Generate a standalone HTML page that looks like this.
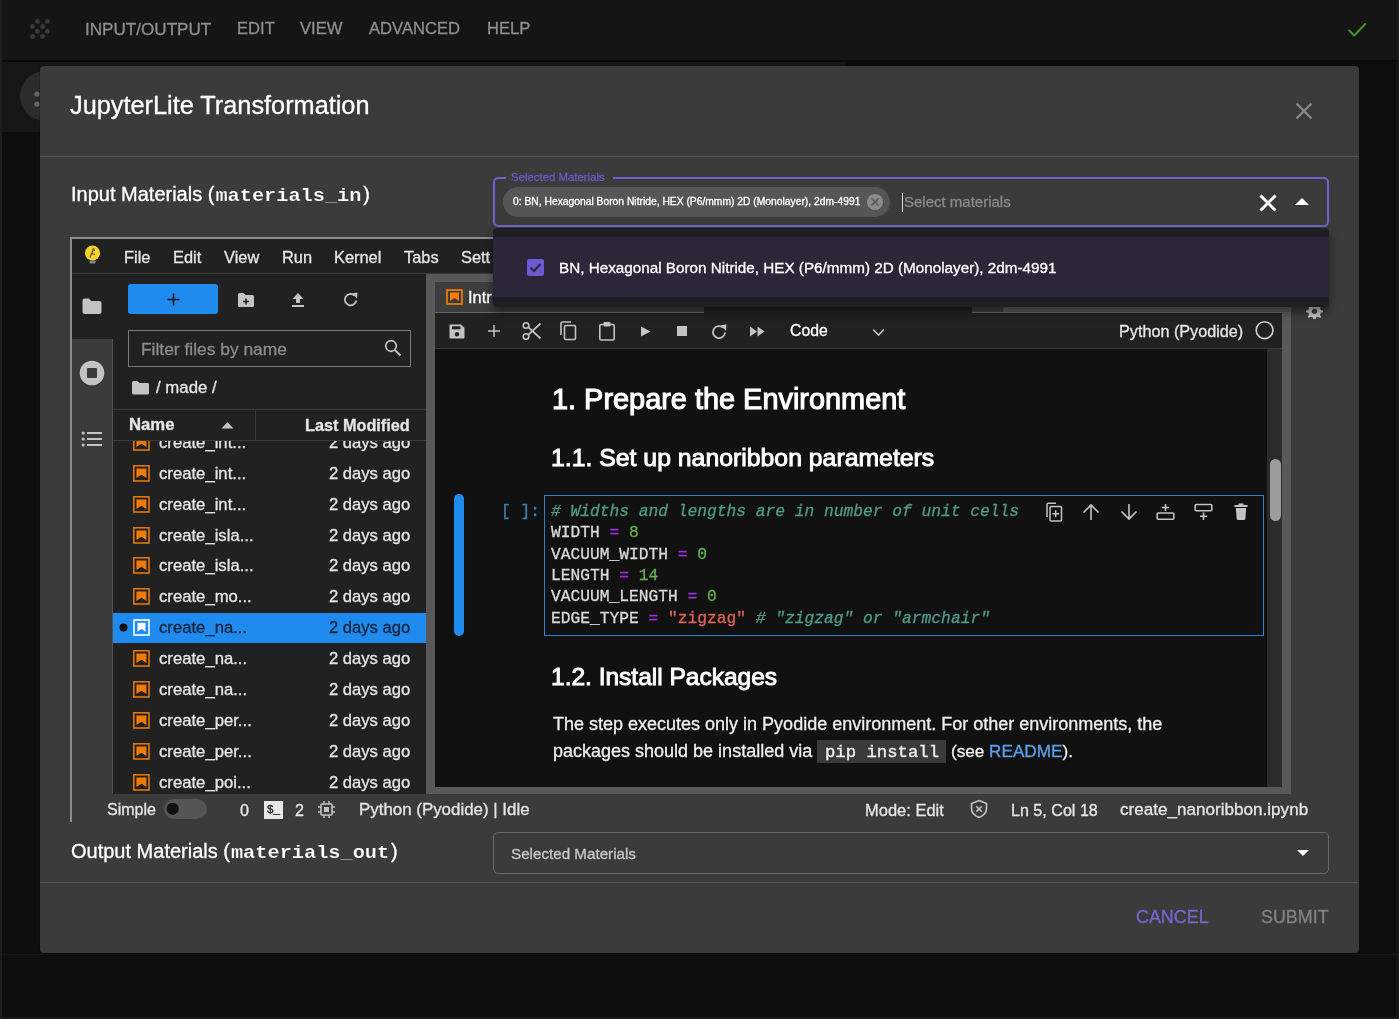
<!DOCTYPE html>
<html><head><meta charset="utf-8"><style>
html,body{margin:0;padding:0;width:1399px;height:1019px;overflow:hidden;background:#0e0e0e;}
.r{position:absolute;display:block;}
.t{position:absolute;white-space:nowrap;line-height:1;-webkit-font-smoothing:antialiased;will-change:transform;-webkit-text-stroke-width:0.3px;}
svg.r{overflow:visible;}
</style></head><body>
<div class="r" style="left:0px;top:0px;width:1399px;height:1019px;background:#0e0e0e;"></div>
<div class="r" style="left:0px;top:0px;width:1399px;height:60px;background:#151515;"></div>
<div class="r" style="left:0px;top:60px;width:1399px;height:2px;background:#0a0a0a;"></div>
<div class="r" style="left:2px;top:62px;width:843px;height:70px;background:#171717;"></div>
<div class="r" style="left:2px;top:954px;width:1397px;height:1px;background:#171717;"></div>
<div class="r" style="left:0px;top:1017px;width:1399px;height:2px;background:#1a1a1a;"></div>
<div class="r" style="left:0px;top:0px;width:1.5px;height:1019px;background:#1d1d1d;"></div>
<div class="r" style="left:1397px;top:0px;width:2px;height:1019px;background:#1b1b1b;"></div>
<svg class="r" style="left:18px;top:70px;" width="52" height="52" viewBox="0 0 52 52"><circle cx="27" cy="26" r="25" fill="#2c2c2c"/><circle cx="19" cy="24" r="2.6" fill="#666"/><circle cx="19" cy="34" r="2.6" fill="#666"/></svg>
<svg class="r" style="left:28px;top:17px;" width="26" height="24" viewBox="0 0 26 24"><circle cx="9.5" cy="4.399999999999999" r="2.4" fill="#3a3a3a"/><circle cx="19.4" cy="4.399999999999999" r="2.4" fill="#3a3a3a"/><circle cx="4.399999999999999" cy="9.5" r="2.4" fill="#3a3a3a"/><circle cx="14.600000000000001" cy="9.5" r="2.4" fill="#3a3a3a"/><circle cx="9.399999999999999" cy="14.5" r="2.4" fill="#3a3a3a"/><circle cx="19.4" cy="14.5" r="2.4" fill="#3a3a3a"/><circle cx="4.5" cy="19.5" r="2.4" fill="#3a3a3a"/><circle cx="14.600000000000001" cy="19.5" r="2.4" fill="#3a3a3a"/></svg>
<div class="t" style="left:85px;top:20.76px;font-size:17.1px;color:#8f8f8f;font-weight:normal;font-family:'Liberation Sans', sans-serif;">INPUT/OUTPUT</div>
<div class="t" style="left:236.5px;top:21.19px;font-size:16.6px;color:#8f8f8f;font-weight:normal;font-family:'Liberation Sans', sans-serif;">EDIT</div>
<div class="t" style="left:300px;top:21.19px;font-size:16.6px;color:#8f8f8f;font-weight:normal;font-family:'Liberation Sans', sans-serif;">VIEW</div>
<div class="t" style="left:368.7px;top:21.19px;font-size:16.6px;color:#8f8f8f;font-weight:normal;font-family:'Liberation Sans', sans-serif;">ADVANCED</div>
<div class="t" style="left:486.6px;top:21.19px;font-size:16.6px;color:#8f8f8f;font-weight:normal;font-family:'Liberation Sans', sans-serif;">HELP</div>
<svg class="r" style="left:1345px;top:18px;" width="26" height="22" viewBox="0 0 26 22"><polyline points="4.2,12.6 9.2,17.4 20.3,6" fill="none" stroke="#47922c" stroke-width="2.1" stroke-linecap="round" stroke-linejoin="round"/></svg>
<div class="r" style="left:40px;top:66px;width:1319px;height:887px;background:#3b3b3b;border-radius:4px;box-shadow:0 0 2px rgba(0,0,0,.6);"></div>
<div class="t" style="left:70px;top:92.80px;font-size:25.3px;color:#fff;font-weight:normal;font-family:'Liberation Sans', sans-serif;">JupyterLite Transformation</div>
<svg class="r" style="left:1295px;top:102px;" width="18" height="18" viewBox="0 0 18 18"><path d="M1.5 1.5L16.5 16.5M16.5 1.5L1.5 16.5" stroke="#8a8a8a" stroke-width="2.2"/></svg>
<div class="r" style="left:40px;top:156px;width:1319px;height:1px;background:#555;"></div>
<div class="t" style="left:71px;top:183.60px;font-size:20px;color:#fff;font-weight:normal;font-family:'Liberation Sans', sans-serif;">Input Materials (<span style="font-family:'Liberation Mono', monospace;font-weight:bold;font-size:20.3px;margin-left:1px;display:inline-block;transform:scaleY(0.9);transform-origin:0 80%;-webkit-text-stroke:0.2px #3b3b3b">materials_in</span><span style="margin-left:1.8px">)</span></div>
<div class="t" style="left:70.7px;top:841.00px;font-size:20px;color:#fff;font-weight:normal;font-family:'Liberation Sans', sans-serif;">Output Materials (<span style="font-family:'Liberation Mono', monospace;font-weight:bold;font-size:20.3px;margin-left:1px;display:inline-block;transform:scaleY(0.9);transform-origin:0 80%;-webkit-text-stroke:0.2px #3b3b3b">materials_out</span><span style="margin-left:1.8px">)</span></div>
<div class="r" style="left:70px;top:237px;width:1259px;height:584px;background:#3b3b3b;"></div>
<div class="r" style="left:70px;top:237px;width:2px;height:585px;background:#8c8c8c;"></div>
<div class="r" style="left:70px;top:237px;width:1259px;height:2px;background:#8c8c8c;"></div>
<div class="r" style="left:72px;top:239px;width:1257px;height:34px;background:#212121;"></div>
<div class="r" style="left:72px;top:273px;width:1257px;height:1px;background:#3a3a3a;"></div>
<svg class="r" style="left:84px;top:245px;" width="18" height="22" viewBox="0 0 18 22"><circle cx="8.5" cy="8" r="7.6" fill="#f2d22e"/><path d="M6 12.5L9.5 3.5M7.5 8.5L11 9.5M9.5 3.5L10.5 6" stroke="#5a4a10" stroke-width="1.1" fill="none"/><rect x="5.5" y="15.5" width="6" height="3" rx="1" fill="#7a8a88"/></svg>
<div class="t" style="left:124.3px;top:249.26px;font-size:16.4px;color:#e6e6e6;font-weight:normal;font-family:'Liberation Sans', sans-serif;">File</div>
<div class="t" style="left:172.9px;top:249.26px;font-size:16.4px;color:#e6e6e6;font-weight:normal;font-family:'Liberation Sans', sans-serif;">Edit</div>
<div class="t" style="left:224.4px;top:249.26px;font-size:16.4px;color:#e6e6e6;font-weight:normal;font-family:'Liberation Sans', sans-serif;">View</div>
<div class="t" style="left:282.4px;top:249.26px;font-size:16.4px;color:#e6e6e6;font-weight:normal;font-family:'Liberation Sans', sans-serif;">Run</div>
<div class="t" style="left:334px;top:249.26px;font-size:16.4px;color:#e6e6e6;font-weight:normal;font-family:'Liberation Sans', sans-serif;">Kernel</div>
<div class="t" style="left:404px;top:249.26px;font-size:16.4px;color:#e6e6e6;font-weight:normal;font-family:'Liberation Sans', sans-serif;">Tabs</div>
<div class="t" style="left:461px;top:249.26px;font-size:16.4px;color:#e6e6e6;font-weight:normal;font-family:'Liberation Sans', sans-serif;">Sett</div>
<div class="r" style="left:72px;top:274px;width:41px;height:65px;background:#212121;"></div>
<svg class="r" style="left:81px;top:297px;" width="22" height="18" viewBox="0 0 22 18"><path d="M1.5 3.5Q1.5 1.5 3.5 1.5L8 1.5L10 4L18.5 4Q20.5 4 20.5 6L20.5 15Q20.5 17 18.5 17L3.5 17Q1.5 17 1.5 15Z" fill="#c3c3c3"/></svg>
<svg class="r" style="left:79px;top:360px;" width="26" height="26" viewBox="0 0 26 26"><circle cx="13" cy="13" r="12.3" fill="#c3c3c3"/><rect x="8" y="8" width="10" height="10" rx="1" fill="#3b3b3b"/></svg>
<svg class="r" style="left:81px;top:430px;" width="22" height="18" viewBox="0 0 22 18"><circle cx="2.2" cy="3" r="1.6" fill="#c3c3c3"/><circle cx="2.2" cy="9" r="1.6" fill="#c3c3c3"/><circle cx="2.2" cy="15" r="1.6" fill="#c3c3c3"/><rect x="6" y="2" width="15" height="2" fill="#c3c3c3"/><rect x="6" y="8" width="15" height="2" fill="#c3c3c3"/><rect x="6" y="14" width="15" height="2" fill="#c3c3c3"/></svg>
<div class="r" style="left:113px;top:274px;width:313px;height:520px;background:#212121;"></div>
<div class="r" style="left:112px;top:339px;width:1px;height:455px;background:#525252;"></div>
<div class="r" style="left:128px;top:284px;width:90px;height:30px;background:#1f8bef;border-radius:3px;"></div>
<svg class="r" style="left:166px;top:292px;" width="15" height="15" viewBox="0 0 15 15"><path d="M7.5 1.5V13.5M1.5 7.5H13.5" stroke="#111" stroke-width="1.6"/></svg>
<svg class="r" style="left:237px;top:292px;" width="18" height="16" viewBox="0 0 18 16"><path d="M1 2.5Q1 1 2.5 1L6.5 1L8.5 3L15.5 3Q17 3 17 4.5L17 13.5Q17 15 15.5 15L2.5 15Q1 15 1 13.5Z" fill="#c3c3c3"/><path d="M9 6.5V12.5M6 9.5H12" stroke="#212121" stroke-width="1.6"/></svg>
<svg class="r" style="left:291px;top:292px;" width="14" height="16" viewBox="0 0 14 16"><path d="M7 1L12.5 7L9 7L9 11L5 11L5 7L1.5 7Z" fill="#c3c3c3"/><rect x="1" y="13" width="12" height="2" fill="#c3c3c3"/></svg>
<svg class="r" style="left:343px;top:291px;" width="16" height="17" viewBox="0 0 16 17"><path d="M13.2 9.5A5.7 5.7 0 1 1 11.3 4.4" fill="none" stroke="#c3c3c3" stroke-width="1.8"/><path d="M9 2.5L14.5 1.5L14 7.5Z" fill="#c3c3c3"/></svg>
<div class="r" style="left:128px;top:330px;width:283px;height:37px;box-sizing:border-box;border:1px solid #7a7a7a;"></div>
<div class="t" style="left:141px;top:340.91px;font-size:17.4px;color:#8d8d8d;font-weight:normal;font-family:'Liberation Sans', sans-serif;">Filter files by name</div>
<svg class="r" style="left:384px;top:339px;" width="18" height="18" viewBox="0 0 18 18"><circle cx="7" cy="7" r="5.3" fill="none" stroke="#c3c3c3" stroke-width="1.7"/><path d="M10.8 10.8L16.5 16.5" stroke="#c3c3c3" stroke-width="1.9"/></svg>
<svg class="r" style="left:131px;top:380px;" width="19" height="16" viewBox="0 0 19 16"><path d="M1 2.5Q1 1 2.5 1L6.5 1L8.5 3L16.5 3Q18 3 18 4.5L18 13Q18 14.5 16.5 14.5L2.5 14.5Q1 14.5 1 13Z" fill="#c3c3c3"/></svg>
<div class="t" style="left:156px;top:380.02px;font-size:16.8px;color:#e6e6e6;font-weight:normal;font-family:'Liberation Sans', sans-serif;">/ made /</div>
<div class="r" style="left:113px;top:274px;width:313px;height:520px;overflow:hidden">
<div class="r" style="left:0;top:338.80px;width:313px;height:30.3px;background:#1f8bef"></div>
<svg class="r" style="left:19.5px;top:159.80px" width="17" height="17"><rect x="0.8" y="0.8" width="15.2" height="15.2" fill="#212121" stroke="#f07a08" stroke-width="1.5"/><path d="M3.4 3.4H13.4V13L8.4 9.8L3.4 13Z" fill="#f07a08"/></svg>
<div class="t" style="left:45.6px;top:160.81px;font-size:16.7px;color:#e6e6e6;font-family:'Liberation Sans', sans-serif">create_int...</div>
<div class="t" style="right:15.6px;text-align:right;top:160.89px;font-size:16.6px;color:#e6e6e6;font-family:'Liberation Sans', sans-serif">2 days ago</div>
<svg class="r" style="left:19.5px;top:190.70px" width="17" height="17"><rect x="0.8" y="0.8" width="15.2" height="15.2" fill="#212121" stroke="#f07a08" stroke-width="1.5"/><path d="M3.4 3.4H13.4V13L8.4 9.8L3.4 13Z" fill="#f07a08"/></svg>
<div class="t" style="left:45.6px;top:191.70px;font-size:16.7px;color:#e6e6e6;font-family:'Liberation Sans', sans-serif">create_int...</div>
<div class="t" style="right:15.6px;text-align:right;top:191.79px;font-size:16.6px;color:#e6e6e6;font-family:'Liberation Sans', sans-serif">2 days ago</div>
<svg class="r" style="left:19.5px;top:221.60px" width="17" height="17"><rect x="0.8" y="0.8" width="15.2" height="15.2" fill="#212121" stroke="#f07a08" stroke-width="1.5"/><path d="M3.4 3.4H13.4V13L8.4 9.8L3.4 13Z" fill="#f07a08"/></svg>
<div class="t" style="left:45.6px;top:222.61px;font-size:16.7px;color:#e6e6e6;font-family:'Liberation Sans', sans-serif">create_int...</div>
<div class="t" style="right:15.6px;text-align:right;top:222.69px;font-size:16.6px;color:#e6e6e6;font-family:'Liberation Sans', sans-serif">2 days ago</div>
<svg class="r" style="left:19.5px;top:252.50px" width="17" height="17"><rect x="0.8" y="0.8" width="15.2" height="15.2" fill="#212121" stroke="#f07a08" stroke-width="1.5"/><path d="M3.4 3.4H13.4V13L8.4 9.8L3.4 13Z" fill="#f07a08"/></svg>
<div class="t" style="left:45.6px;top:253.51px;font-size:16.7px;color:#e6e6e6;font-family:'Liberation Sans', sans-serif">create_isla...</div>
<div class="t" style="right:15.6px;text-align:right;top:253.59px;font-size:16.6px;color:#e6e6e6;font-family:'Liberation Sans', sans-serif">2 days ago</div>
<svg class="r" style="left:19.5px;top:283.40px" width="17" height="17"><rect x="0.8" y="0.8" width="15.2" height="15.2" fill="#212121" stroke="#f07a08" stroke-width="1.5"/><path d="M3.4 3.4H13.4V13L8.4 9.8L3.4 13Z" fill="#f07a08"/></svg>
<div class="t" style="left:45.6px;top:284.41px;font-size:16.7px;color:#e6e6e6;font-family:'Liberation Sans', sans-serif">create_isla...</div>
<div class="t" style="right:15.6px;text-align:right;top:284.49px;font-size:16.6px;color:#e6e6e6;font-family:'Liberation Sans', sans-serif">2 days ago</div>
<svg class="r" style="left:19.5px;top:314.30px" width="17" height="17"><rect x="0.8" y="0.8" width="15.2" height="15.2" fill="#212121" stroke="#f07a08" stroke-width="1.5"/><path d="M3.4 3.4H13.4V13L8.4 9.8L3.4 13Z" fill="#f07a08"/></svg>
<div class="t" style="left:45.6px;top:315.31px;font-size:16.7px;color:#e6e6e6;font-family:'Liberation Sans', sans-serif">create_mo...</div>
<div class="t" style="right:15.6px;text-align:right;top:315.39px;font-size:16.6px;color:#e6e6e6;font-family:'Liberation Sans', sans-serif">2 days ago</div>
<svg class="r" style="left:5.7px;top:349.10px" width="9" height="9"><circle cx="4.5" cy="4.5" r="4" fill="#111"/></svg>
<svg class="r" style="left:19.5px;top:345.20px" width="17" height="17"><rect x="1" y="1" width="15" height="15" fill="#1f8bef" stroke="#fff" stroke-width="1.6"/><path d="M4.5 3.8H12.5V12.8L8.5 9.8L4.5 12.8Z" fill="#fff"/></svg>
<div class="t" style="left:45.6px;top:346.20px;font-size:16.7px;color:#10243a;font-family:'Liberation Sans', sans-serif">create_na...</div>
<div class="t" style="right:15.6px;text-align:right;top:346.29px;font-size:16.6px;color:#10243a;font-family:'Liberation Sans', sans-serif">2 days ago</div>
<svg class="r" style="left:19.5px;top:376.10px" width="17" height="17"><rect x="0.8" y="0.8" width="15.2" height="15.2" fill="#212121" stroke="#f07a08" stroke-width="1.5"/><path d="M3.4 3.4H13.4V13L8.4 9.8L3.4 13Z" fill="#f07a08"/></svg>
<div class="t" style="left:45.6px;top:377.10px;font-size:16.7px;color:#e6e6e6;font-family:'Liberation Sans', sans-serif">create_na...</div>
<div class="t" style="right:15.6px;text-align:right;top:377.19px;font-size:16.6px;color:#e6e6e6;font-family:'Liberation Sans', sans-serif">2 days ago</div>
<svg class="r" style="left:19.5px;top:407.00px" width="17" height="17"><rect x="0.8" y="0.8" width="15.2" height="15.2" fill="#212121" stroke="#f07a08" stroke-width="1.5"/><path d="M3.4 3.4H13.4V13L8.4 9.8L3.4 13Z" fill="#f07a08"/></svg>
<div class="t" style="left:45.6px;top:408.01px;font-size:16.7px;color:#e6e6e6;font-family:'Liberation Sans', sans-serif">create_na...</div>
<div class="t" style="right:15.6px;text-align:right;top:408.09px;font-size:16.6px;color:#e6e6e6;font-family:'Liberation Sans', sans-serif">2 days ago</div>
<svg class="r" style="left:19.5px;top:437.90px" width="17" height="17"><rect x="0.8" y="0.8" width="15.2" height="15.2" fill="#212121" stroke="#f07a08" stroke-width="1.5"/><path d="M3.4 3.4H13.4V13L8.4 9.8L3.4 13Z" fill="#f07a08"/></svg>
<div class="t" style="left:45.6px;top:438.90px;font-size:16.7px;color:#e6e6e6;font-family:'Liberation Sans', sans-serif">create_per...</div>
<div class="t" style="right:15.6px;text-align:right;top:438.99px;font-size:16.6px;color:#e6e6e6;font-family:'Liberation Sans', sans-serif">2 days ago</div>
<svg class="r" style="left:19.5px;top:468.80px" width="17" height="17"><rect x="0.8" y="0.8" width="15.2" height="15.2" fill="#212121" stroke="#f07a08" stroke-width="1.5"/><path d="M3.4 3.4H13.4V13L8.4 9.8L3.4 13Z" fill="#f07a08"/></svg>
<div class="t" style="left:45.6px;top:469.81px;font-size:16.7px;color:#e6e6e6;font-family:'Liberation Sans', sans-serif">create_per...</div>
<div class="t" style="right:15.6px;text-align:right;top:469.89px;font-size:16.6px;color:#e6e6e6;font-family:'Liberation Sans', sans-serif">2 days ago</div>
<svg class="r" style="left:19.5px;top:499.70px" width="17" height="17"><rect x="0.8" y="0.8" width="15.2" height="15.2" fill="#212121" stroke="#f07a08" stroke-width="1.5"/><path d="M3.4 3.4H13.4V13L8.4 9.8L3.4 13Z" fill="#f07a08"/></svg>
<div class="t" style="left:45.6px;top:500.70px;font-size:16.7px;color:#e6e6e6;font-family:'Liberation Sans', sans-serif">create_poi...</div>
<div class="t" style="right:15.6px;text-align:right;top:500.79px;font-size:16.6px;color:#e6e6e6;font-family:'Liberation Sans', sans-serif">2 days ago</div>
<div class="r" style="left:0;top:135px;width:313px;height:32px;background:#212121;border-top:1px solid #3a3a3a;border-bottom:1px solid #3a3a3a;box-sizing:border-box"></div>
<div class="r" style="left:142px;top:136px;width:1px;height:31px;background:#3a3a3a"></div>
</div>
<div class="t" style="left:128.6px;top:416.50px;font-size:16.7px;color:#e6e6e6;font-weight:bold;font-family:'Liberation Sans', sans-serif;">Name</div>
<div class="t" style="right:989px;text-align:right;top:416.99px;font-size:16.25px;color:#e6e6e6;font-weight:bold;font-family:'Liberation Sans', sans-serif;">Last Modified</div>
<svg class="r" style="left:221px;top:421px;" width="13" height="8" viewBox="0 0 13 8"><path d="M0.5 7.5L6.5 1L12.5 7.5Z" fill="#c3c3c3"/></svg>
<div class="r" style="left:426px;top:274px;width:865px;height:520px;background:#595959;"></div>
<div class="r" style="left:435px;top:282px;width:269px;height:30px;background:#3d3d3d;"></div>
<div class="r" style="left:435px;top:312px;width:856px;height:1px;background:#666;"></div>
<div class="r" style="left:704px;top:282px;width:268px;height:31px;background:#212121;"></div>
<div class="r" style="left:972px;top:282px;width:31px;height:30px;background:#3d3d3d;"></div>
<svg class="r" style="left:446px;top:289px;" width="17" height="16" viewBox="0 0 17 16"><rect x="1" y="1" width="15" height="14" fill="#3d3d3d" stroke="#f57c00" stroke-width="1.7"/><path d="M4 3.6H13V12L8.5 9L4 12Z" fill="#f57c00"/></svg>
<div class="t" style="left:468.4px;top:289.06px;font-size:16.4px;color:#fff;font-weight:normal;font-family:'Liberation Sans', sans-serif;">Intr</div>
<div class="r" style="left:435px;top:313px;width:847px;height:35px;background:#212121;"></div>
<div class="r" style="left:435px;top:348px;width:847px;height:1px;background:#3a3a3a;"></div>
<svg class="r" style="left:449px;top:323.5px;" width="16" height="15" viewBox="0 0 16 15"><path d="M0.5 1.5Q0.5 0.5 1.5 0.5L12 0.5L15.5 4L15.5 13.5Q15.5 14.5 14.5 14.5L1.5 14.5Q0.5 14.5 0.5 13.5Z" fill="#c3c3c3"/><rect x="3" y="2.3" width="8.5" height="3" fill="#212121"/><circle cx="8" cy="10.2" r="2.2" fill="#212121"/></svg>
<svg class="r" style="left:488px;top:325px;" width="12" height="12" viewBox="0 0 12 12"><path d="M6 0V12M0 6H12" stroke="#c3c3c3" stroke-width="1.5"/></svg>
<svg class="r" style="left:522px;top:321px;" width="20" height="20" viewBox="0 0 20 20"><circle cx="4" cy="15.5" r="2.8" fill="none" stroke="#c3c3c3" stroke-width="1.6"/><circle cx="4" cy="4.5" r="2.8" fill="none" stroke="#c3c3c3" stroke-width="1.6"/><path d="M6.2 6.2L18.5 17.5M6.2 13.8L18.5 2.5" stroke="#c3c3c3" stroke-width="1.7"/></svg>
<svg class="r" style="left:559px;top:321px;" width="19" height="20" viewBox="0 0 19 20"><path d="M2 14V2.5Q2 1 3.5 1H12" fill="none" stroke="#c3c3c3" stroke-width="1.6"/><rect x="5.5" y="4.5" width="11" height="14" rx="1.2" fill="none" stroke="#c3c3c3" stroke-width="1.6"/></svg>
<svg class="r" style="left:598px;top:321px;" width="18" height="20" viewBox="0 0 18 20"><rect x="1.8" y="3.5" width="14.4" height="15.5" rx="1.3" fill="none" stroke="#c3c3c3" stroke-width="1.6"/><rect x="5.5" y="1" width="7" height="4.5" rx="1" fill="#c3c3c3"/></svg>
<svg class="r" style="left:640px;top:326px;" width="11" height="11" viewBox="0 0 11 11"><path d="M1 0.5L10.5 5.5L1 10.5Z" fill="#c3c3c3"/></svg>
<div class="r" style="left:677px;top:326px;width:10px;height:10px;background:#c3c3c3;"></div>
<svg class="r" style="left:711px;top:323px;" width="17" height="17" viewBox="0 0 17 17"><path d="M14 9.5A6 6 0 1 1 12 4.6" fill="none" stroke="#c3c3c3" stroke-width="1.8"/><path d="M9.5 2.5L15.5 1.2L15 7.8Z" fill="#c3c3c3"/></svg>
<svg class="r" style="left:749px;top:326px;" width="17" height="11" viewBox="0 0 17 11"><path d="M1 0.5L8 5.5L1 10.5Z M8.5 0.5L15.5 5.5L8.5 10.5Z" fill="#c3c3c3"/></svg>
<div class="t" style="left:789.5px;top:323.17px;font-size:15.8px;color:#fff;font-weight:normal;font-family:'Liberation Sans', sans-serif;">Code</div>
<svg class="r" style="left:872px;top:328px;" width="13" height="9" viewBox="0 0 13 9"><path d="M1.2 1.5L6.5 7L11.8 1.5" fill="none" stroke="#c3c3c3" stroke-width="1.6"/></svg>
<div class="t" style="left:1118.6px;top:323.03px;font-size:16.2px;color:#e6e6e6;font-weight:normal;font-family:'Liberation Sans', sans-serif;">Python (Pyodide)</div>
<svg class="r" style="left:1255px;top:321px;" width="20" height="20" viewBox="0 0 20 20"><circle cx="9.6" cy="9.2" r="8.4" fill="none" stroke="#d0d0d0" stroke-width="1.6"/></svg>
<div class="r" style="left:435px;top:349px;width:832px;height:438px;background:#111111;"></div>
<div class="r" style="left:1267px;top:349px;width:15px;height:438px;background:#2c2c2c;"></div>
<div class="r" style="left:1270px;top:459px;width:11px;height:62px;background:#9c9c9c;border-radius:6px;"></div>
<div class="t" style="left:551.6px;top:385.33px;font-size:28.9px;color:#fff;font-weight:normal;font-family:'Liberation Sans', sans-serif;-webkit-text-stroke:1.1px #fff">1. Prepare the Environment</div>
<div class="t" style="left:550.8px;top:445.92px;font-size:24.8px;color:#fff;font-weight:normal;font-family:'Liberation Sans', sans-serif;-webkit-text-stroke:0.95px #fff">1.1. Set up nanoribbon parameters</div>
<div class="r" style="left:454px;top:494px;width:10px;height:142px;background:#1f8bef;border-radius:5px;"></div>
<div class="t" style="left:500.6px;top:504.05px;font-size:16.25px;color:#3f7fb3;font-weight:normal;font-family:'Liberation Mono', monospace;">[ ]:</div>
<div class="r" style="left:544px;top:494.5px;width:720px;height:141px;box-sizing:border-box;border:1.5px solid #2d7fd0;"></div>
<div class="t" style="left:550.5px;top:504.05px;font-size:16.25px;color:#dadada;font-weight:normal;font-family:'Liberation Mono', monospace;"><span style="color:#4e9b86;font-style:italic"># Widths and lengths are in number of unit cells</span></div>
<div class="t" style="left:550.5px;top:525.35px;font-size:16.25px;color:#dadada;font-weight:normal;font-family:'Liberation Mono', monospace;">WIDTH <span style="color:#a22ce0">=</span> <span style="color:#64b04e">8</span></div>
<div class="t" style="left:550.5px;top:546.65px;font-size:16.25px;color:#dadada;font-weight:normal;font-family:'Liberation Mono', monospace;">VACUUM_WIDTH <span style="color:#a22ce0">=</span> <span style="color:#64b04e">0</span></div>
<div class="t" style="left:550.5px;top:567.95px;font-size:16.25px;color:#dadada;font-weight:normal;font-family:'Liberation Mono', monospace;">LENGTH <span style="color:#a22ce0">=</span> <span style="color:#64b04e">14</span></div>
<div class="t" style="left:550.5px;top:589.25px;font-size:16.25px;color:#dadada;font-weight:normal;font-family:'Liberation Mono', monospace;">VACUUM_LENGTH <span style="color:#a22ce0">=</span> <span style="color:#64b04e">0</span></div>
<div class="t" style="left:550.5px;top:610.55px;font-size:16.25px;color:#dadada;font-weight:normal;font-family:'Liberation Mono', monospace;">EDGE_TYPE <span style="color:#a22ce0">=</span> <span style="color:#e2625a">"zigzag"</span> <span style="color:#4e9b86;font-style:italic"># "zigzag" or "armchair"</span></div>
<svg class="r" style="left:1045px;top:502px;" width="18" height="20" viewBox="0 0 18 20"><path d="M2 15V2.5Q2 1.2 3.3 1.2H11" fill="none" stroke="#c3c3c3" stroke-width="1.5"/><rect x="5" y="4.5" width="11.5" height="14.5" rx="1" fill="none" stroke="#c3c3c3" stroke-width="1.5"/><path d="M10.7 8.3V15.2M7.3 11.7H14.2" stroke="#c3c3c3" stroke-width="1.4"/></svg>
<svg class="r" style="left:1082px;top:503px;" width="18" height="18" viewBox="0 0 18 18"><path d="M9 17V2M1.5 9.5L9 2L16.5 9.5" fill="none" stroke="#c3c3c3" stroke-width="1.6"/></svg>
<svg class="r" style="left:1120px;top:503px;" width="18" height="18" viewBox="0 0 18 18"><path d="M9 1V16M1.5 8.5L9 16L16.5 8.5" fill="none" stroke="#c3c3c3" stroke-width="1.6"/></svg>
<svg class="r" style="left:1156px;top:503px;" width="19" height="18" viewBox="0 0 19 18"><rect x="1.2" y="10" width="16.6" height="6.2" rx="1" fill="none" stroke="#c3c3c3" stroke-width="1.6"/><path d="M9.5 1V8M6 4.5H13" stroke="#c3c3c3" stroke-width="1.6"/></svg>
<svg class="r" style="left:1194px;top:503px;" width="19" height="18" viewBox="0 0 19 18"><rect x="1.2" y="1.5" width="16.6" height="6.2" rx="1" fill="none" stroke="#c3c3c3" stroke-width="1.6"/><path d="M9.5 9.5V17M6 13.2H13" stroke="#c3c3c3" stroke-width="1.6"/></svg>
<svg class="r" style="left:1234px;top:503px;" width="14" height="18" viewBox="0 0 14 18"><rect x="0.5" y="2" width="13" height="2" fill="#c3c3c3"/><rect x="4.5" y="0.5" width="5" height="2" fill="#c3c3c3"/><path d="M1.8 5H12.2L11.3 16Q11.2 17 10.2 17H3.8Q2.8 17 2.7 16Z" fill="#c3c3c3"/></svg>
<div class="t" style="left:550.8px;top:665.07px;font-size:24.5px;color:#fff;font-weight:normal;font-family:'Liberation Sans', sans-serif;-webkit-text-stroke:0.95px #fff">1.2. Install Packages</div>
<div class="t" style="left:552.6px;top:714.70px;font-size:18px;color:#f0f0f0;font-weight:normal;font-family:'Liberation Sans', sans-serif;">The step executes only in Pyodide environment. For other environments, the</div>
<div class="r" style="left:817px;top:740px;width:129px;height:23px;background:#3a3a3a;"></div>
<div class="t" style="left:552.6px;top:742.20px;font-size:18px;color:#f0f0f0;font-weight:normal;font-family:'Liberation Sans', sans-serif;">packages should be installed via</div>
<div class="t" style="left:824.5px;top:744.35px;font-size:17.3px;color:#f0f0f0;font-weight:normal;font-family:'Liberation Mono', monospace;-webkit-text-stroke:0.35px #f0f0f0">pip install</div>
<div class="t" style="left:950.8px;top:742.92px;font-size:17.15px;color:#f0f0f0;font-weight:normal;font-family:'Liberation Sans', sans-serif;">(see <span style="color:#5aa2ee">README</span>).</div>
<svg class="r" style="left:1305px;top:301px;clip-path:inset(5px 0 0 0)" width="18" height="18" viewBox="0 0 18 18"><path d="M9 1.5L10.5 1.5L11 4L13 5L15.2 3.8L16.3 4.9L15 7L15.8 9L18 9.7V11.3L15.8 11.8L15 13.8L16.2 16L15.1 17.1L13 15.8L11 16.6L10.5 19H8.5L8 16.6L6 15.8L3.8 17.1L2.7 16L4 13.8L3.2 11.8L1 11.3V9.7L3.2 9L4 7L2.8 4.9L3.9 3.8L6 5L8 4L8.5 1.5Z" fill="#c3c3c3"/><circle cx="9.5" cy="10.3" r="2.6" fill="#3b3b3b"/></svg>
<div class="t" style="left:107px;top:802.40px;font-size:16px;color:#e6e6e6;font-weight:normal;font-family:'Liberation Sans', sans-serif;">Simple</div>
<div class="r" style="left:164px;top:799px;width:43px;height:20px;background:#555;border-radius:10px;"></div>
<svg class="r" style="left:166px;top:801px;" width="16" height="16" viewBox="0 0 16 16"><circle cx="6.7" cy="7.8" r="6.1" fill="#111"/></svg>
<div class="t" style="left:239.6px;top:802.23px;font-size:16.2px;color:#e6e6e6;font-weight:normal;font-family:'Liberation Sans', sans-serif;">0</div>
<div class="r" style="left:264px;top:801px;width:19px;height:18px;background:#e8e8e8;"></div>
<div class="t" style="left:266.5px;top:804.23px;font-size:11.5px;color:#222;font-weight:normal;font-family:'Liberation Sans', sans-serif;">$_</div>
<div class="t" style="left:294.6px;top:802.23px;font-size:16.2px;color:#e6e6e6;font-weight:normal;font-family:'Liberation Sans', sans-serif;">2</div>
<svg class="r" style="left:317px;top:800px;" width="19" height="19" viewBox="0 0 19 19"><rect x="4" y="4" width="11" height="11" rx="1" fill="none" stroke="#c3c3c3" stroke-width="1.6"/><rect x="7" y="7" width="5" height="5" fill="#c3c3c3"/><path d="M7 1V4M12 1V4M7 15V18M12 15V18M1 7H4M1 12H4M15 7H18M15 12H18" stroke="#c3c3c3" stroke-width="1.5"/></svg>
<div class="t" style="left:359px;top:801.63px;font-size:16.9px;color:#e6e6e6;font-weight:normal;font-family:'Liberation Sans', sans-serif;">Python (Pyodide) | Idle</div>
<div class="t" style="left:865.4px;top:801.98px;font-size:16.5px;color:#e6e6e6;font-weight:normal;font-family:'Liberation Sans', sans-serif;">Mode: Edit</div>
<svg class="r" style="left:969px;top:799px;" width="20" height="20" viewBox="0 0 20 20"><path d="M10 1.5L17.5 4.5V9.5Q17.5 15.5 10 18.5Q2.5 15.5 2.5 9.5V4.5Z" fill="none" stroke="#c3c3c3" stroke-width="1.6"/><path d="M7.2 7.2L12.8 12.8M12.8 7.2L7.2 12.8" stroke="#c3c3c3" stroke-width="1.6"/></svg>
<div class="t" style="left:1011px;top:802.32px;font-size:16.1px;color:#e6e6e6;font-weight:normal;font-family:'Liberation Sans', sans-serif;">Ln 5, Col 18</div>
<div class="t" style="left:1120px;top:801.47px;font-size:17.1px;color:#e6e6e6;font-weight:normal;font-family:'Liberation Sans', sans-serif;">create_nanoribbon.ipynb</div>
<div class="r" style="left:493px;top:176.5px;width:836px;height:50px;box-sizing:border-box;border:2px solid #7062cc;border-radius:5px;"></div>
<div class="r" style="left:506px;top:172px;width:107px;height:8px;background:#3b3b3b;"></div>
<div class="t" style="left:511px;top:172.31px;font-size:11.4px;color:#6a5bc6;font-weight:normal;font-family:'Liberation Sans', sans-serif;">Selected Materials</div>
<div class="r" style="left:503px;top:187px;width:387px;height:30px;background:#565656;border-radius:15px;"></div>
<div class="t" style="left:512.6px;top:196.75px;font-size:10.3px;color:#fff;font-weight:normal;font-family:'Liberation Sans', sans-serif;">0: BN, Hexagonal Boron Nitride, HEX (P6/mmm) 2D (Monolayer), 2dm-4991</div>
<svg class="r" style="left:866px;top:193px;" width="18" height="18" viewBox="0 0 18 18"><circle cx="9" cy="9" r="8" fill="#8c8c8c"/><path d="M5.5 5.5L12.5 12.5M12.5 5.5L5.5 12.5" stroke="#565656" stroke-width="1.6"/></svg>
<div class="r" style="left:902px;top:193px;width:1px;height:19px;background:#ddd;"></div>
<div class="t" style="left:903.7px;top:194.25px;font-size:15px;color:#8a8a8a;font-weight:normal;font-family:'Liberation Sans', sans-serif;">Select materials</div>
<svg class="r" style="left:1258px;top:193px;" width="20" height="20" viewBox="0 0 20 20"><path d="M2.5 2.5L17.5 17.5M17.5 2.5L2.5 17.5" stroke="#fff" stroke-width="3"/></svg>
<svg class="r" style="left:1294px;top:197px;" width="16" height="9" viewBox="0 0 16 9"><path d="M1 8L8 1L15 8Z" fill="#fff"/></svg>
<div class="r" style="left:493px;top:228px;width:836px;height:79px;background:#1f1e22;border-radius:4px;box-shadow:0 5px 8px rgba(0,0,0,.45);"></div>
<div class="r" style="left:493px;top:237px;width:836px;height:59.5px;background:#2c2639;"></div>
<div class="r" style="left:527px;top:259px;width:17px;height:17px;background:#6d5ad2;border-radius:2px;"></div>
<svg class="r" style="left:527px;top:259px;" width="17" height="17" viewBox="0 0 17 17"><polyline points="3.5,8.5 7,12 13.5,5" fill="none" stroke="#2c2639" stroke-width="2"/></svg>
<div class="t" style="left:558.6px;top:259.54px;font-size:15.25px;color:#fff;font-weight:normal;font-family:'Liberation Sans', sans-serif;">BN, Hexagonal Boron Nitride, HEX (P6/mmm) 2D (Monolayer), 2dm-4991</div>
<div class="r" style="left:493px;top:832px;width:836px;height:42px;box-sizing:border-box;border:1px solid #6a6a6a;border-radius:5px;"></div>
<div class="t" style="left:510.9px;top:846.48px;font-size:15.2px;color:#c8c8c8;font-weight:normal;font-family:'Liberation Sans', sans-serif;">Selected Materials</div>
<svg class="r" style="left:1296px;top:849px;" width="14" height="8" viewBox="0 0 14 8"><path d="M1 1L13 1L7 7Z" fill="#fff"/></svg>
<div class="r" style="left:40px;top:882px;width:1319px;height:1px;background:#555;"></div>
<div class="t" style="left:1136.2px;top:908.58px;font-size:17.9px;color:#7766d0;font-weight:normal;font-family:'Liberation Sans', sans-serif;">CANCEL</div>
<div class="t" style="left:1260.8px;top:908.58px;font-size:17.9px;color:#828282;font-weight:normal;font-family:'Liberation Sans', sans-serif;">SUBMIT</div>
</body></html>
